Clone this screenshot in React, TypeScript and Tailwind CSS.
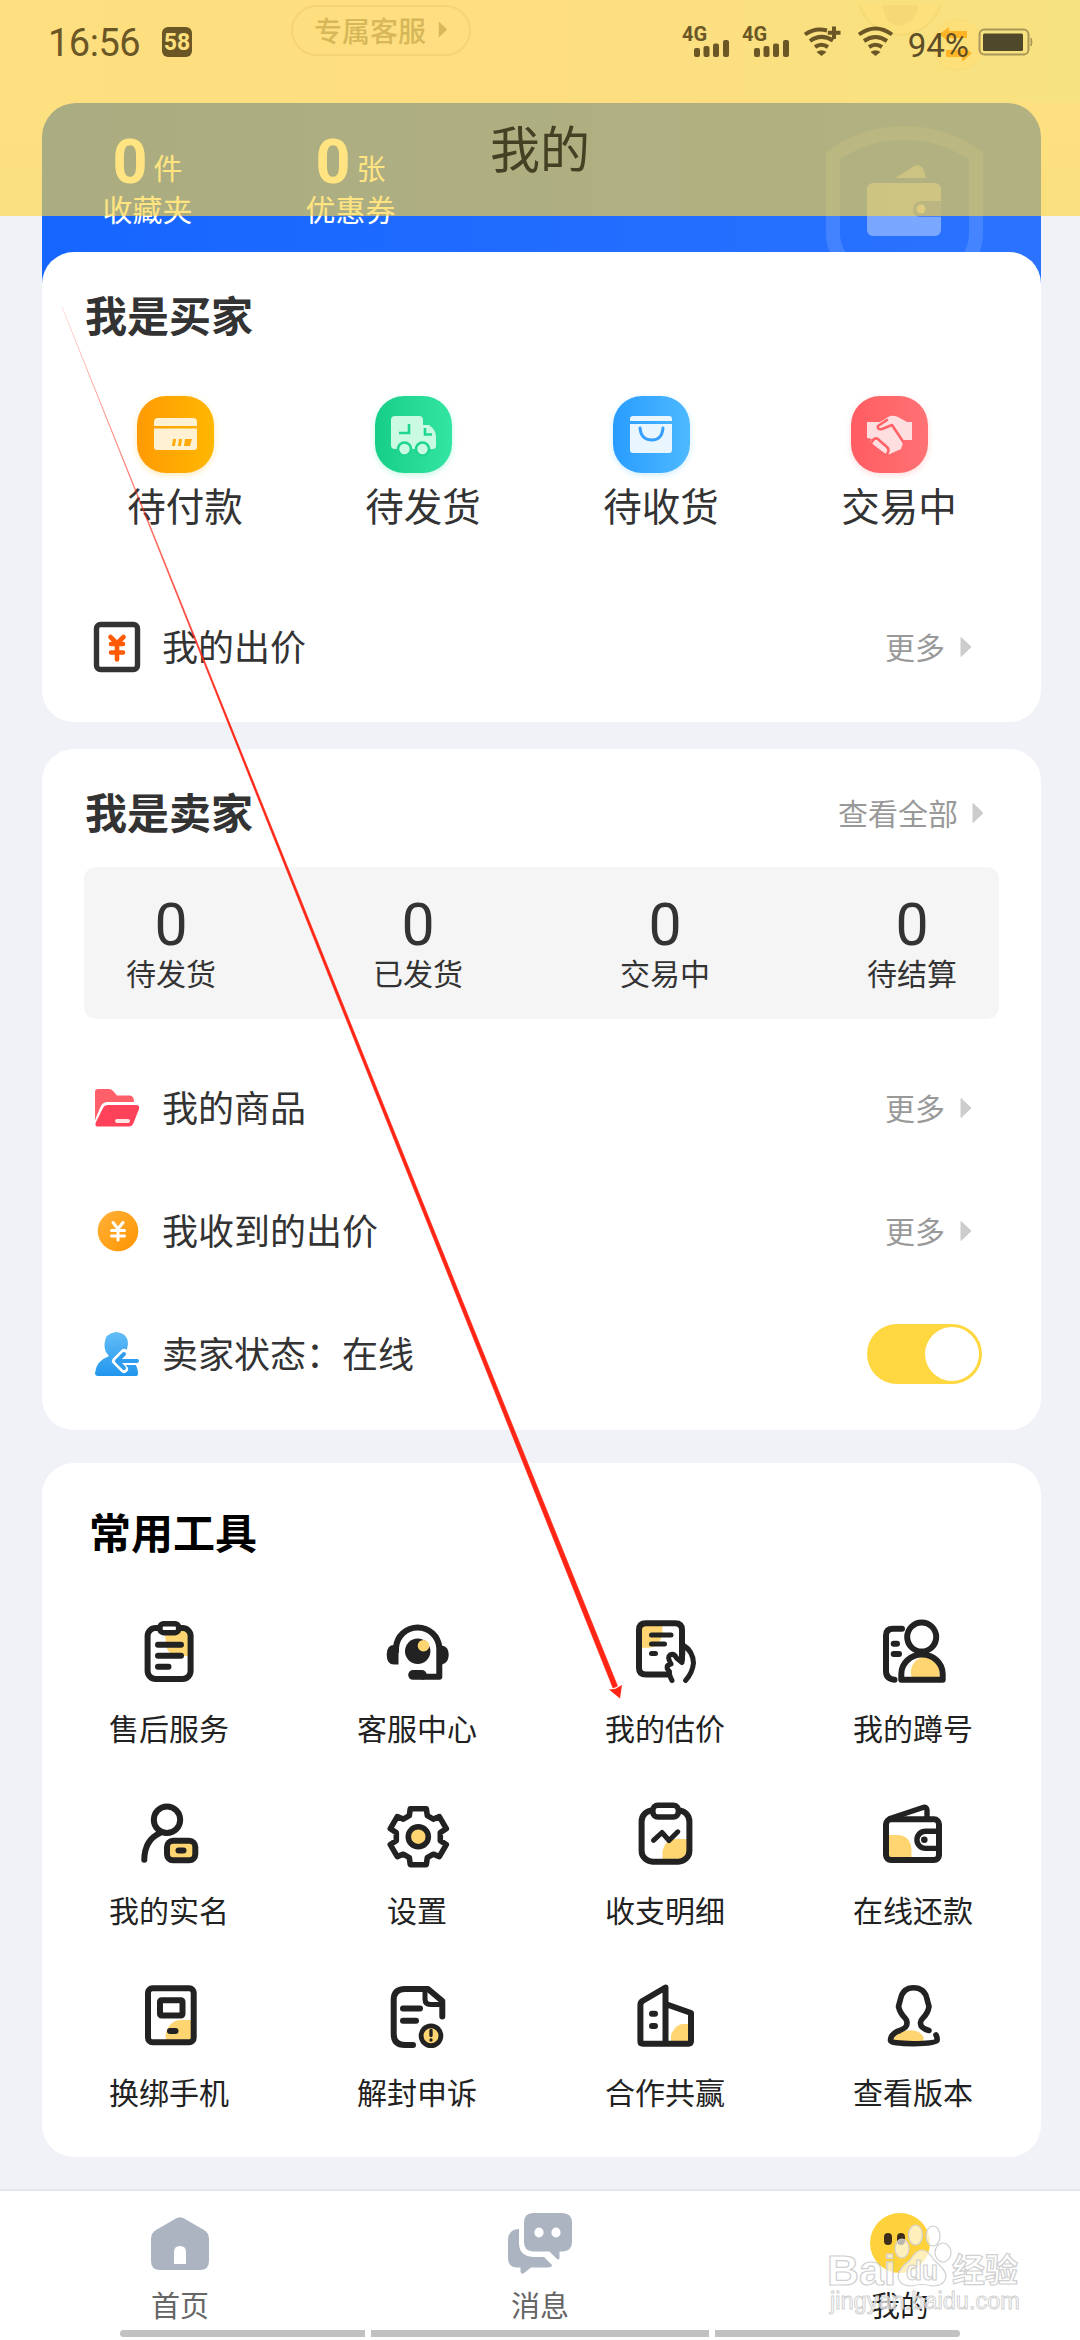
import type { ReactNode } from "react";

type Item = { label: string; icon: ReactNode };

const INK = "#222222";
const SUN = "#ffd572";

function Caret({ className = "text-[#cccccc]" }: { className?: string }) {
  return (
    <svg width="12" height="22" viewBox="0 0 12 22" className={className}>
      <path d="M1 1.5 11 11 1 20.5Z" fill="currentColor" stroke="currentColor" strokeLinejoin="round" />
    </svg>
  );
}

function ToolIcon({ children }: { children: ReactNode }) {
  return (
    <svg
      width="80"
      height="80"
      viewBox="0 0 80 80"
      fill="none"
      stroke={INK}
      strokeWidth="6"
      strokeLinecap="round"
      strokeLinejoin="round"
    >
      {children}
    </svg>
  );
}

const tools: Item[] = [
  {
    label: "售后服务",
    icon: (
      <ToolIcon>
        <path d="M36 19H61V45H49Q38 44 37 33Q36 26 36 19Z" fill={SUN} stroke="none" />
        <rect x="18.6" y="17" width="43" height="51" rx="8" />
        <rect x="31" y="12.7" width="18.6" height="9" rx="3.5" fill="#fff" strokeWidth="5.4" />
        <path d="M29 33.7H52M29 44.7H52M29 55.7H39.5" />
      </ToolIcon>
    ),
  },
  {
    label: "客服中心",
    icon: (
      <ToolIcon>
        <path d="M19 40V36.7A21.7 21.7 0 0 1 62.3 36.7V65.7H46" />
        <path d="M21.5 34H17Q9.7 34 9.7 43.5Q9.7 53.5 17 53.5H21.5Z" fill={INK} stroke="none" />
        <path d="M60 34.5H65Q71.7 35.5 71.7 43.7Q71.7 52 65 53.5H60Z" fill={INK} stroke="none" />
        <rect x="31.2" y="59" width="18.5" height="9.8" rx="4.8" fill={INK} stroke="none" />
        <circle cx="40.7" cy="40.3" r="12.7" fill={INK} stroke="none" />
        <circle cx="46.5" cy="34.7" r="5.8" fill={SUN} stroke="none" />
      </ToolIcon>
    ),
  },
  {
    label: "我的估价",
    icon: (
      <ToolIcon>
        <path d="M15 14H37.3V24Q34 36 24 36.7H15Z" fill={SUN} stroke="none" />
        <path d="M43 63.5H21Q14 63.5 14 57V19Q14 12.3 21 12.3H50Q57 12.3 57 19V48" />
        <path d="M26.5 24H46M26.5 33H39.5M26.5 42.5H30.5" strokeWidth="5" />
        <path
          d="M47 69.5Q44 64 44.500 60.5Q41 57 42.5 54.5L46 53Q42 46 45 44Q49 42 51.5 47L57 51.5Q58 42 58 34Q68 40 68.5 52Q67.5 62 60.5 69.5"
          strokeWidth="5"
        />
      </ToolIcon>
    ),
  },
  {
    label: "我的蹲号",
    icon: (
      <ToolIcon>
        <path d="M38.5 66A14 15 0 0 1 66.5 57V66Z" fill={SUN} stroke="none" />
        <circle cx="48.7" cy="26" r="14.5" />
        <path d="M28.3 68.7V63A20.7 19.5 0 0 1 69.7 63V68.7Z" />
        <path d="M29 17.8H20Q13 17.8 13 24.5V60Q13 68 21.5 68.7" />
        <path d="M20.7 32.7H24M20.7 43H26" />
      </ToolIcon>
    ),
  },
  {
    label: "我的实名",
    icon: (
      <ToolIcon>
        <circle cx="38" cy="26.7" r="13.2" />
        <path d="M31 40Q15.5 47 15.3 66.8" />
        <rect x="38" y="47.8" width="28.3" height="19.5" rx="6" fill={SUN} />
        <path d="M49.5 57.4H54.5" />
      </ToolIcon>
    ),
  },
  {
    label: "设置",
    icon: (
      <ToolIcon>
        <path
          transform="translate(41.3 43.7)"
          strokeWidth="5.6"
          d="M-8 -28H8L9 -21 15 -17.5 21 -20 28 -8 22 -4V4L28 8 21 20 15 17.5 9 21 8 28H-8L-9 21 -15 17.5 -21 20 -28 8 -22 4V-4L-28 -8 -21 -20 -15 -17.5 -9 -21Z"
        />
        <circle cx="41.3" cy="43.7" r="10" fill={SUN} strokeWidth="5.6" />
      </ToolIcon>
    ),
  },
  {
    label: "收支明细",
    icon: (
      <ToolIcon>
        <path d="M37.5 67V58Q40 47 50 46H63V67Z" fill={SUN} stroke="none" />
        <rect x="16.6" y="17.5" width="47.8" height="51.2" rx="11" />
        <rect x="27.8" y="12.2" width="25.6" height="11.8" rx="5" fill="#fff" strokeWidth="5.6" />
        <path d="M28.5 47.3 37 39.5 44 47.5 52.8 38.8" strokeWidth="5" />
      </ToolIcon>
    ),
  },
  {
    label: "在线还款",
    icon: (
      <ToolIcon>
        <path d="M14 42H24Q37 42 38.5 56V66H14Z" fill={SUN} stroke="none" />
        <rect x="13" y="26.3" width="53" height="40.7" rx="5" />
        <path d="M17 25.5 50 14.5Q53.5 13.5 54 17V25" strokeWidth="5.4" />
        <path d="M65 38.2H52.5A8.5 8.5 0 0 0 52.5 55.4H65" strokeWidth="5.4" />
        <circle cx="51.3" cy="46.7" r="3.3" fill={INK} stroke="none" />
      </ToolIcon>
    ),
  },
  {
    label: "换绑手机",
    icon: (
      <ToolIcon>
        <path d="M36.7 65V58Q41 46 50 45H63V65Z" fill={SUN} stroke="none" />
        <rect x="19" y="13.3" width="45.7" height="54" rx="4.5" />
        <rect x="31" y="25.2" width="22.5" height="15.3" rx="1.5" />
        <path d="M41 56H46.5" />
      </ToolIcon>
    ),
  },
  {
    label: "解封申诉",
    icon: (
      <ToolIcon>
        <path d="M36 70H28Q16.7 70 16.7 59V25Q16.7 14 28 14H51L65.3 26V41.5" />
        <path d="M48 15V24Q48 29.5 53.5 29.5H64" strokeWidth="5" />
        <path d="M26 33.5H43M26 45.7H39" />
        <circle cx="54" cy="60.7" r="9.9" fill={SUN} strokeWidth="4.8" />
        <path d="M54 55.5V60.5M54 65V65.1" strokeWidth="3.4" />
      </ToolIcon>
    ),
  },
  {
    label: "合作共赢",
    icon: (
      <ToolIcon>
        <path d="M46 66V60Q50 50 57 49H65V66Z" fill={SUN} stroke="none" />
        <path d="M40.5 68.7V12.5L17.5 26Q15.4 27.5 15.4 30V66.5Q15.4 68.7 18 68.7H63.5Q66 68.7 66 66V38L42 29.5" />
        <path d="M27 38.7H30M27 51H30" />
      </ToolIcon>
    ),
  },
  {
    label: "查看版本",
    icon: (
      <ToolIcon>
        <path d="M20 66Q23 57 34 55.5Q46 54 50.5 62V67H20Z" fill={SUN} stroke="none" />
        <path
          strokeWidth="5.6"
          d="M56 55.5Q47 53 47.5 47.5Q47.5 45.5 50 43Q55 38 56 31.5L54 24Q51.5 12.8 40.5 12.8Q30 12.8 27.5 24L25.5 31.5Q27 38 32 43Q35 46 33.5 50.5Q32 54 24 56.5Q17.5 60 17.5 65.5Q18 68.5 40.5 68.7Q62 68.5 64 65.5Q64.5 62.5 63 60"
        />
      </ToolIcon>
    ),
  },
];

const buyerActions = [
  {
    label: "待付款",
    tile: "bg-linear-to-r from-[#ff9a05] to-[#ffb700] shadow-[0_2px_6px_#ffe9b5]",
    icon: (
      <svg width="77" height="77" viewBox="0 0 77 77" fill="#fff1d2">
        <path d="M17 30V26Q17 22 21 22H56Q60 22 60 26V30ZM17 32.5H60V51Q60 54 57 54H20Q17 54 17 51Z" />
        <path d="M36 43h3l-1 7h-3zM42 43h3l-1 7h-3zM48 43h7l-2 7h-6z" fill="#ffa90a" />
      </svg>
    ),
  },
  {
    label: "待发货",
    tile: "bg-linear-to-r from-[#14ce88] to-[#33e5a2] shadow-[0_2px_6px_#c4f8e4]",
    icon: (
      <svg width="77" height="77" viewBox="0 0 77 77" fill="#cafae1">
        <path d="M16 24Q16 20 20 20H44Q48 20 48 24V29H54Q61 34 61 41V50Q61 53 58 53H20Q16 53 16 49Z" />
        <g fill="none" stroke="#1fd691" strokeWidth="2.6">
          <path d="M24 37H34V28M50 32V38.5H57" />
          <circle cx="29.5" cy="53" r="6.5" fill="#cafae1" />
          <circle cx="47.5" cy="53" r="6.5" fill="#cafae1" />
        </g>
      </svg>
    ),
  },
  {
    label: "待收货",
    tile: "bg-linear-to-r from-[#289cff] to-[#4db9ff] shadow-[0_2px_6px_#cdedff]",
    icon: (
      <svg width="77" height="77" viewBox="0 0 77 77" fill="#e9f5ff">
        <path d="M17 25V23Q17 20 20 20H56Q59 20 59 23V25ZM17 28H59V54Q59 57 56 57H20Q17 57 17 54Z" />
        <path d="M27 32Q28 44 39 44Q49 44 50 32" fill="none" stroke="#359fff" strokeWidth="3" strokeLinecap="round" />
      </svg>
    ),
  },
  {
    label: "交易中",
    tile: "bg-linear-to-r from-[#ff5c62] to-[#ff7274] shadow-[0_2px_6px_#ffdada]",
    icon: (
      <svg width="77" height="77" viewBox="0 0 77 77" fill="#ffdedf">
        <path d="M16 26H29L39 20Q43 19 47 21L56 26H61V44H53L50 53 41 57Q37 60 32 56L19 46 21 43 16 42Z" />
        <g fill="none" stroke="#ff6267" strokeWidth="2.6" strokeLinecap="round" strokeLinejoin="round">
          <path d="M36 24 27 30Q26 34 31 33L41 29 53 47" />
          <path d="M23 43Q26 41 29 45L36 51Q39 54 36 58" />
          <path d="M18 50 23 43" />
        </g>
      </svg>
    ),
  },
];

const sellerStats = ["待发货", "已发货", "交易中", "待结算"];

function BidIcon() {
  return (
    <svg width="48" height="52" viewBox="0 0 48 52" fill="none">
      <rect x="3.500" y="3.5" width="41" height="45" rx="4" stroke="#333" strokeWidth="5.4" />
      <path
        d="M17.5 16 24 22.5 30.5 16M18 23H30M18 31.5H30M24 23V38.5"
        stroke="#ff5a05"
        strokeWidth="4.6"
        strokeLinecap="round"
      />
    </svg>
  );
}

function FolderIcon() {
  return (
    <svg width="48" height="44" viewBox="0 0 48 44">
      <path d="M2 34V6Q2 3 5 3H16Q19 3 21 6L24 9.5H37Q41 10 41 16H14Q9 16 7 22Z" fill="#ff5f68" />
      <path d="M15 19H43Q47 19 46 23L40.5 37Q39 40.5 36 40.5H4Q1.5 40 3 36L9.5 23Q11 19 15 19Z" fill="#ff4259" />
      <rect x="22" y="33" width="15" height="4" rx="2" fill="#ffe5e4" />
    </svg>
  );
}

function CoinIcon() {
  return (
    <svg width="48" height="44" viewBox="0 0 48 44">
      <defs>
        <linearGradient id="coin" x1="0" y1="0" x2="1" y2="1">
          <stop stopColor="#ffb13a" />
          <stop offset="1" stopColor="#ff9500" />
        </linearGradient>
      </defs>
      <circle cx="25" cy="22" r="20.3" fill="url(#coin)" />
      <path
        d="M20 13.5 25 20 30 13.5M18.5 21.5H31.5M18.5 27H31.5M25 21V31"
        fill="none"
        stroke="#fff"
        strokeWidth="3"
        strokeLinecap="round"
      />
    </svg>
  );
}

function SellerIcon() {
  return (
    <svg width="48" height="48" viewBox="0 0 48 48">
      <defs>
        <linearGradient id="seller" x1="0" y1="0" x2="0" y2="1">
          <stop stopColor="#64bdf7" />
          <stop offset="1" stopColor="#2196ee" />
        </linearGradient>
      </defs>
      <path
        d="M23 2Q35 3 35 14Q34 22 29 26Q45 30 45 44Q45 46 42 46H5Q2 46 2 43Q3 31 16 26Q11 21 11.5 14Q12 3 23 2Z"
        fill="url(#seller)"
      />
      <path d="M47 31H31M31 23 23 31 31 39" fill="none" stroke="#fff" strokeWidth="8" strokeLinecap="round" strokeLinejoin="round" />
      <path d="M44 31H25M31 24 24 31 31 38" fill="none" stroke="#2f9df0" strokeWidth="4" strokeLinecap="round" strokeLinejoin="round" />
    </svg>
  );
}

function Row({ icon, label, children }: { icon: ReactNode; label: string; children?: ReactNode }) {
  return (
    <div className="flex h-[123px] items-center pr-[69px] pl-[51px]">
      <div className="flex w-[69px] items-center">{icon}</div>
      <span className="flex-1 pb-[3px] text-[36px] leading-[44px]">{label}</span>
      {children ?? (
        <span className="flex items-center gap-[15px] text-[30px] leading-9 text-[#999999]">
          <span className="pb-[2px]">更多</span>
          <Caret />
        </span>
      )}
    </div>
  );
}

function WalletBanner() {
  return (
    <svg width="160" height="130" viewBox="0 0 160 130">
      <path
        d="M17 134Q9 122 9 110V32Q40 9 80 9Q120 9 152 32V110Q152 122 145 134"
        fill="none"
        stroke="#fff"
        strokeOpacity=".13"
        strokeWidth="14"
      />
      <path d="M71 54 92 41Q100 40 102 54Z" fill="#fff" opacity=".35" />
      <rect x="43" y="59" width="74" height="53" rx="6" fill="#fff" opacity=".38" />
      <path d="M119 77H97Q89 78 89 86Q89 93 97 93H119Z" fill="#2c70ff" opacity=".7" />
      <circle cx="97" cy="85" r="4.5" fill="#b7c9ff" opacity=".8" />
    </svg>
  );
}

function AssetBanner() {
  const assets = [
    { unit: "件", label: "收藏夹" },
    { unit: "张", label: "优惠券" },
  ];
  return (
    <section className="flex h-[200px] items-start justify-between rounded-t-[34px] bg-linear-to-r from-[#1565ff] to-[#2b73ff] pr-[57px] pl-[4px] text-white">
      <div className="flex pt-[26px]">
        {assets.map((asset) => (
          <div key={asset.label} className="flex w-[203px] flex-col items-center">
            <div className="flex h-[62px] items-start gap-1.5">
              <span className="font-[Roboto] text-[61px] leading-[66px] font-bold">0</span>
              <span className="pt-[20px] text-[29px] leading-9">{asset.unit}</span>
            </div>
            <span className="text-[30px] leading-[34px]">{asset.label}</span>
          </div>
        ))}
      </div>
      <div className="pt-[21px]">
        <WalletBanner />
      </div>
    </section>
  );
}

function Signal() {
  return (
    <svg width="48" height="34" viewBox="0 0 48 34" fill="#6b5726" className="overflow-visible">
      <text x="0" y="16" fontFamily="Roboto" fontSize="20" fontWeight="700">
        4G
      </text>
      <rect x="12" y="23" width="6" height="9" rx="2" />
      <rect x="21.5" y="21" width="6" height="11" rx="2" />
      <rect x="31" y="18.5" width="6" height="13.5" rx="2" />
      <rect x="41" y="15" width="6" height="17" rx="2" />
    </svg>
  );
}

function Wifi({ plus = false }: { plus?: boolean }) {
  return (
    <svg width="38" height="34" viewBox="0 0 38 34" fill="none" stroke="#6b5726" strokeWidth="4">
      <path d={plus ? "M2 9.5Q12 2 24 5.5" : "M2 9.5Q18.5 -2.5 35 9.5"} />
      <path d={plus ? "M7 16Q18 8 30 15.500" : "M7 16Q18.5 8 30 16"} />
      <path d="M12 22Q18.5 17.500 25 22" />
      <path d="M18.5 31 13.5 27Q18.5 23.5 23.5 27Z" fill="#6b5726" stroke="none" />
      {plus && <path d="M31 1.5V14M24.8 7.8H37.5" />}
    </svg>
  );
}

function StatusBar() {
  return (
    <div className="flex h-[84px] items-center pr-[47px] pl-[48px] text-[#6b5726]">
      <span className="w-[114px] pt-0.5 font-[Roboto] text-[38px] leading-10 tracking-[-0.5px]">16:56</span>
      <span className="flex h-[30px] w-[30px] items-center justify-center rounded-[6px] bg-[#6b5726] font-[Roboto] text-[23px] leading-none font-bold text-[#ffe07f]">
        58
      </span>
      <div className="ml-auto flex items-center">
        <div className="flex items-center gap-3">
          <Signal />
          <Signal />
        </div>
        <div className="ml-[13px] flex gap-4">
          <Wifi plus />
          <Wifi />
        </div>
        <span className="ml-[13px] pt-2 font-[Roboto] text-[33px] leading-8 text-[#5c4c28]">94%</span>
        <svg width="55" height="30" viewBox="0 0 55 30" className="ml-[9px]">
          <rect x="1.5" y="2.5" width="49" height="25" rx="5" fill="none" stroke="#a89758" strokeWidth="2" />
          <rect x="5" y="6.5" width="40" height="17.5" rx="1.5" fill="#50482a" />
          <path d="M53 11Q55 15 53 19Z" fill="#a89758" stroke="#a89758" />
        </svg>
      </div>
    </div>
  );
}

function TitleBar() {
  return (
    <header className="absolute inset-x-0 top-0 h-[216px] bg-[#ffd53a]/64">
      <StatusBar />
      <h1 className="pt-[30px] text-center text-[50px] leading-[64px] text-[#434024]">我的</h1>
    </header>
  );
}

function HeroBackdrop() {
  return (
    <div className="flex h-[103px] items-start bg-linear-to-r from-[#fbf3fc] via-[#fbeefc] via-50% to-[#e8f9fc] pt-[5px] pl-[291px]">
      <div className="flex h-[51px] w-[180px] items-center justify-center gap-3 rounded-full border-2 border-[#e0d3df] pb-[2px] text-[28px] leading-8 font-medium text-[#8f8290]">
        专属客服
        <Caret className="h-[17px] w-[10px] text-[#8f8290]" />
      </div>
      <svg width="150" height="84" viewBox="0 0 150 84" className="ml-[380px]">
        <circle cx="49" cy="-12" r="42" fill="#f6f3ee" stroke="#e4e0dc" strokeWidth="2" />
        <path d="M32 0H66Q68 16 49 21Q32 19 32 0Z" fill="#e2dfe4" />
        <circle cx="107" cy="40" r="25" fill="#f9f3ea" stroke="#ece6dc" strokeWidth="1" />
        <path d="M88 29 98 22V26H116V33H98V37ZM121 48 111 41V45H95V52H111V57Z" fill="#ff7d00" />
      </svg>
    </div>
  );
}

function BuyerCard() {
  return (
    <section className="-mt-[51px] h-[470px] rounded-[32px] bg-white">
      <h2 className="pt-[38px] pl-[43px] text-[42px] leading-[48px] font-bold">我是买家</h2>
      <div className="flex pt-[58px] pl-[24px]">
        {buyerActions.map((action) => (
          <div key={action.label} className="flex w-[238px] flex-col items-center gap-[9px]">
            <div className={`mr-[19px] size-[77px] rounded-[29px] ${action.tile}`}>{action.icon}</div>
            <span className="text-[38.5px] leading-[44px]">{action.label}</span>
          </div>
        ))}
      </div>
      <div className="pt-[59px]">
        <Row icon={<BidIcon />} label="我的出价" />
      </div>
    </section>
  );
}

function SellerCard() {
  return (
    <section className="mt-[27px] h-[681px] rounded-[32px] bg-white">
      <div className="flex items-center justify-between pt-[38px] pr-[57px] pl-[43px]">
        <h2 className="text-[42px] leading-[48px] font-bold">我是卖家</h2>
        <span className="flex items-center gap-[14px] pt-[3px] text-[30px] leading-9 text-[#999999]">
          <span className="pb-[2px]">查看全部</span>
          <Caret />
        </span>
      </div>
      <div className="mx-[42px] mt-[32px] flex h-[152px] justify-between rounded-[12px] bg-[#f5f5f5] px-[37px] pt-[27px]">
        {sellerStats.map((label) => (
          <div key={label} className="flex w-[100px] flex-col items-center">
            <span className="font-[Roboto] text-[59px] leading-[62px]">0</span>
            <span className="text-[30px] leading-[32px] whitespace-nowrap">{label}</span>
          </div>
        ))}
      </div>
      <div className="pt-[27px]">
        <Row icon={<FolderIcon />} label="我的商品" />
        <Row icon={<CoinIcon />} label="我收到的出价" />
        <Row icon={<SellerIcon />} label="卖家状态：在线">
          <div className="-mr-[10px] flex h-[60px] w-[115px] items-center justify-end rounded-full bg-[#ffd740] p-[3px]">
            <div className="size-[54px] rounded-full bg-white" />
          </div>
        </Row>
      </div>
    </section>
  );
}

function ToolsCard() {
  return (
    <section className="mt-[33px] h-[694px] rounded-[32px] bg-white">
      <h2 className="pt-[44px] pl-[47px] text-[42px] leading-[48px] font-bold text-black">常用工具</h2>
      <div className="grid grid-cols-[repeat(4,248px)] pt-[56px] pl-[3px]">
        {tools.map((tool) => (
          <div key={tool.label} className="flex h-[182px] flex-col items-center gap-[18px]">
            {tool.icon}
            <span className="text-[30px] leading-[36px] text-[#222222]">{tool.label}</span>
          </div>
        ))}
      </div>
    </section>
  );
}

const tabs = [
  {
    label: "首页",
    active: false,
    icon: (
      <svg width="64" height="64" viewBox="0 0 64 64" fill="#abb4c0">
        <path d="M27 7Q32 3.5 37 7L56 18Q61 21 61 27V49Q61 58 52 58H12Q3 58 3 49V27Q3 21 8 18Z" />
        <path d="M26 52V40Q26 34 32 34Q38 34 38 40V52Z" fill="#fff" />
      </svg>
    ),
  },
  {
    label: "消息",
    active: false,
    icon: (
      <svg width="64" height="64" viewBox="0 0 64 64" fill="#abb4c0">
        <path d="M10 17Q0 18 0 28V46Q0 55.5 9 55.5H12.5V60Q13.5 63 16 61L23 55.5H40Q43 55.5 44.5 53.5L36 45H25Q11 44 11 31V17Z" />
        <path d="M25 1H54Q64 1 64 11V30Q64 39 54.5 39.5H51.5V46Q51 49 48 46L41.5 39.5H25Q16 39 16 30V11Q16 1 25 1Z" />
        <ellipse cx="31" cy="20.5" rx="4.6" ry="5" fill="#fff" />
        <ellipse cx="48" cy="20.5" rx="4.6" ry="5" fill="#fff" />
      </svg>
    ),
  },
  {
    label: "我的",
    active: true,
    icon: (
      <svg width="64" height="64" viewBox="0 0 64 64">
        <circle cx="32" cy="31" r="30" fill="#ffd23b" />
        <rect x="16" y="21" width="8" height="12" rx="4" fill="#3d2f1c" />
        <rect x="29" y="21" width="8" height="12" rx="4" fill="#3d2f1c" />
      </svg>
    ),
  },
];

function TabBar() {
  return (
    <nav className="mt-[32px] flex h-[151px] flex-col border-t-2 border-[#e4e7ec] bg-white">
      <div className="flex h-[139px] pt-[21px]">
        {tabs.map((tab) => (
          <div key={tab.label} className="flex flex-1 flex-col items-center gap-[10px]">
            {tab.icon}
            <span className={tab.active ? "text-[29px] leading-[36px] text-[#1f1f1f]" : "text-[29px] leading-[36px] text-[#666666]"}>
              {tab.label}
            </span>
          </div>
        ))}
      </div>
      <div className="flex gap-[6px] px-[120px]">
        <div className="h-[7px] w-[245px] rounded-l-full bg-[#c1c1c1]" />
        <div className="h-[7px] w-[338px] bg-[#c1c1c1]" />
        <div className="h-[7px] w-[245px] rounded-r-full bg-[#c1c1c1]" />
      </div>
    </nav>
  );
}

function Watermark() {
  return (
    <svg
      width="210"
      height="110"
      viewBox="0 0 210 110"
      className="absolute top-[2220px] left-[820px]"
      fill="#fff"
      fillOpacity=".65"
      stroke="#d0d0d0"
      strokeWidth="1.2"
      fontFamily="'Liberation Sans', 'Noto Sans CJK SC', sans-serif"
    >
      <text x="7" y="65" fontSize="43" fontWeight="700" textLength="69" lengthAdjust="spacingAndGlyphs">
        Bai
      </text>
      <ellipse cx="82" cy="28.5" rx="7" ry="9.5" />
      <ellipse cx="95.5" cy="15" rx="7" ry="10" />
      <ellipse cx="113" cy="16" rx="7" ry="10" />
      <ellipse cx="123" cy="32.5" rx="8" ry="9.5" />
      <path d="M102 30Q108 30 114 40Q126 50 126 56Q125 66 112 66Q102 63 92 66Q79 66 78 56Q79 48 90 40Q96 30 102 30Z" />
      <text x="86" y="60" fontSize="27" fontWeight="700" textLength="32" lengthAdjust="spacingAndGlyphs">
        du
      </text>
      <text x="132" y="62" fontSize="33" fontWeight="700">
        经验
      </text>
      <text x="10" y="89" fontSize="23" textLength="190" lengthAdjust="spacingAndGlyphs" strokeWidth=".9">
        jingyan.baidu.com
      </text>
    </svg>
  );
}

// Pointer that leads to 我的估价
function GuideArrow() {
  return (
    <svg width="1080" height="2340" viewBox="0 0 1080 2340" className="pointer-events-none absolute top-0 left-0">
      <defs>
        <linearGradient id="guide" gradientUnits="userSpaceOnUse" x1="62" y1="307" x2="228" y2="720">
          <stop stopColor="#ff2414" stopOpacity=".1" />
          <stop offset="1" stopColor="#ff2414" />
        </linearGradient>
      </defs>
      <path d="M62 307 613 1688 617.5 1686Z" fill="url(#guide)" stroke="url(#guide)" strokeWidth=".7" />
      <path d="M620 1698.5 609 1689.5 615 1689 622 1685Z" fill="#ff2414" />
    </svg>
  );
}

export default function App() {
  return (
    <div className="relative h-[2340px] w-[1080px] overflow-hidden bg-[#f0f2f7] font-['Noto_Sans_CJK_SC',sans-serif] text-[#333333]">
      <HeroBackdrop />
      <div className="bg-linear-to-b from-[#fbf3fc] from-0% via-[#f0f2f7] via-[113px] to-[#f0f2f7] pr-[39px] pl-[42px]">
        <AssetBanner />
        <BuyerCard />
        <SellerCard />
        <ToolsCard />
      </div>
      <TabBar />
      <TitleBar />
      <Watermark />
      <GuideArrow />
    </div>
  );
}
